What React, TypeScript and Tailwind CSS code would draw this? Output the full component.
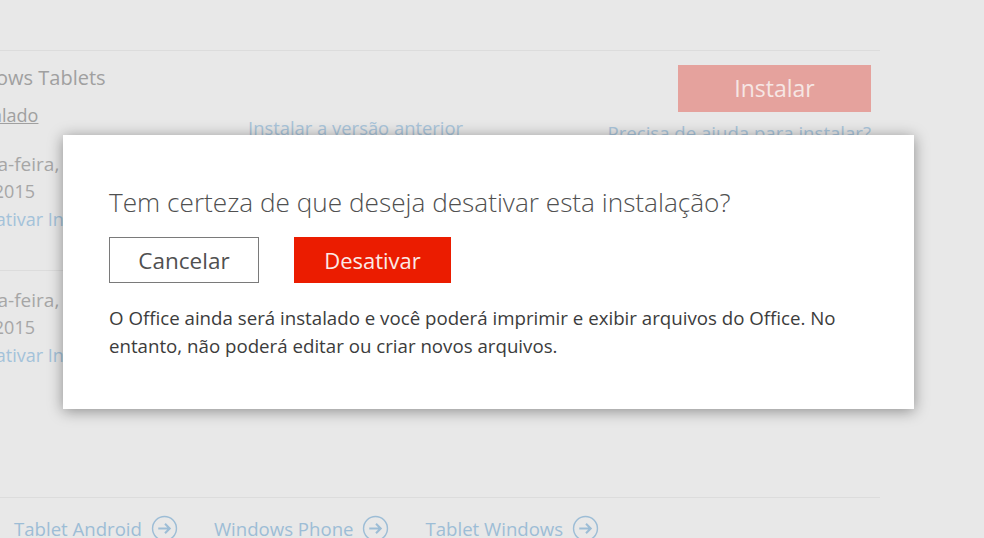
import React from 'react';

const font = { fontFamily: '"Open Sans", sans-serif' };

const ArrowCircle = () => (
  <svg width="27" height="27" viewBox="0 0 26 26" fill="none" className="shrink-0">
    <circle cx="13" cy="13" r="11.5" stroke="#9dbdd6" strokeWidth="1.4" />
    <path d="M7 13h11M13.5 8.5 18 13l-4.5 4.5" stroke="#9dbdd6" strokeWidth="2" />
  </svg>
);

const InstallDates = ({ className }: { className?: string }) => (
  <div className={className}>
    <div className="-ml-[54px] text-[19px] leading-[27px] text-[#a6a6a6] whitespace-nowrap">Quarta-feira, 10</div>
    <div className="-ml-[32px] text-[18px] leading-[27px] text-[#a6a6a6] whitespace-nowrap">de 2015</div>
    <div className="-ml-[36px] text-[18px] leading-[28px] text-[#a3c2da] whitespace-nowrap">Desativar Instalação</div>
  </div>
);

const FooterLink = ({ label }: { label: string }) => (
  <div className="flex items-center gap-[9px] text-[18.6px] leading-[26px] text-[#9dbdd6] whitespace-nowrap">
    {label}
    <ArrowCircle />
  </div>
);

export default function App() {
  return (
    <div className="relative w-[984px] h-[538px] overflow-hidden bg-[#e8e8e8]" style={font}>
      <div className="w-[880px] pt-[50px]">
        <div className="h-[220px] border-t border-[#dcdcdc] flex">
          <div className="w-[248px] shrink-0 text-[#a0a0a0]">
            <div className="pt-[12px] -ml-[52px] text-[20px] leading-[30px] whitespace-nowrap">Windows Tablets</div>
            <div className="mt-[9px] -ml-[39px] text-[18px] leading-[26px] underline whitespace-nowrap">Instalado</div>
            <InstallDates className="mt-[23px]" />
          </div>
          <div className="pt-[64px] text-[18.4px] leading-[26px] text-[#a9c4da] whitespace-nowrap">Instalar a versão anterior</div>
          <div className="ml-auto mr-[9px] pt-[14px] flex flex-col items-end">
            <div className="w-[193px] h-[47px] bg-[#e5a29d] flex items-center justify-center text-[23px] text-[#f6e6e4]">Instalar</div>
            <div className="mt-[8px] text-[18.6px] leading-[26px] text-[#a9c4da] whitespace-nowrap">Precisa de ajuda para instalar?</div>
          </div>
        </div>
        <div className="h-[227px] border-t border-[#dcdcdc]">
          <InstallDates className="pt-[16px]" />
        </div>
        <div className="border-t border-[#dcdcdc] pt-[17px] pl-[14px] flex gap-[36px]">
          <FooterLink label="Tablet Android" />
          <FooterLink label="Windows Phone" />
          <FooterLink label="Tablet Windows" />
        </div>
      </div>

      <div className="absolute left-[63px] top-[135px] w-[851px] h-[274px] bg-white shadow-[0_2px_14px_rgba(0,0,0,0.4)] pl-[46px] pt-[49px]">
        <div className="text-[26.2px] leading-[36px] font-light text-[#505050] whitespace-nowrap">Tem certeza de que deseja desativar esta instalação?</div>
        <div className="mt-[17px] flex gap-[35px]">
          <div className="w-[150px] h-[46px] pt-[1px] border border-[#7a7a7a] flex items-center justify-center text-[22.5px] text-[#505050]">Cancelar</div>
          <div className="w-[157px] h-[46px] pt-[1px] bg-[#eb1c00] flex items-center justify-center text-[22px] text-[#fbe9e6]">Desativar</div>
        </div>
        <div className="mt-[21px] w-[740px] text-[18.7px] leading-[28px] text-[#3c3c3c]">
          O Office ainda será instalado e você poderá imprimir e exibir arquivos do Office. No entanto, não poderá editar ou criar novos arquivos.
        </div>
      </div>
    </div>
  );
}
